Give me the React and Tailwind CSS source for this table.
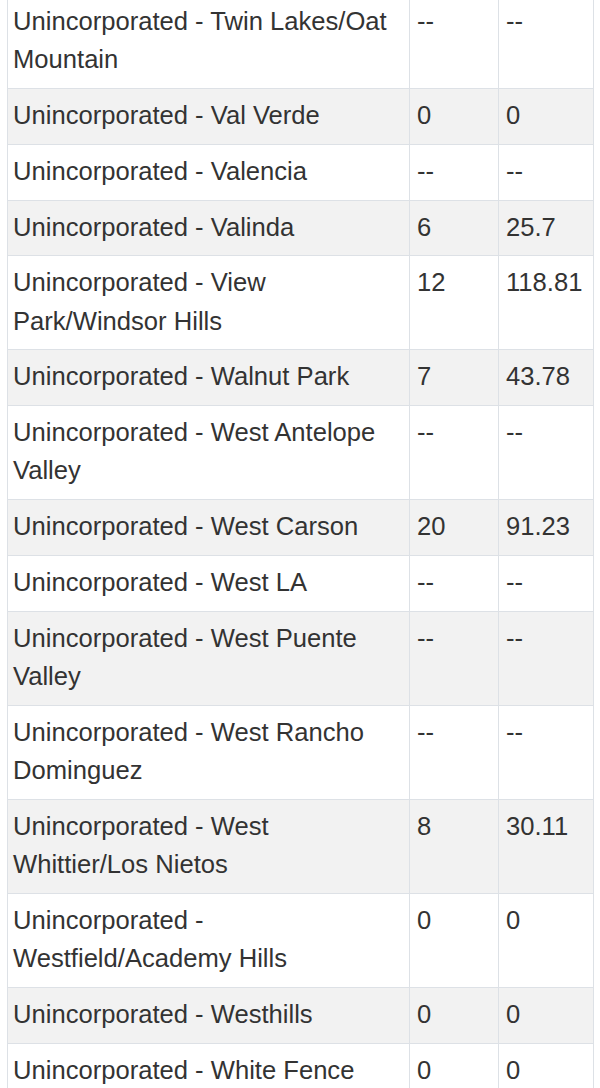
const rows = [
  ["Unincorporated - Twin Lakes/Oat Mountain", "--", "--"],
  ["Unincorporated - Val Verde", "0", "0"],
  ["Unincorporated - Valencia", "--", "--"],
  ["Unincorporated - Valinda", "6", "25.7"],
  ["Unincorporated - View Park/Windsor Hills", "12", "118.81"],
  ["Unincorporated - Walnut Park", "7", "43.78"],
  ["Unincorporated - West Antelope Valley", "--", "--"],
  ["Unincorporated - West Carson", "20", "91.23"],
  ["Unincorporated - West LA", "--", "--"],
  ["Unincorporated - West Puente Valley", "--", "--"],
  ["Unincorporated - West Rancho Dominguez", "--", "--"],
  ["Unincorporated - West Whittier/Los Nietos", "8", "30.11"],
  ["Unincorporated - Westfield/Academy Hills", "0", "0"],
  ["Unincorporated - Westhills", "0", "0"],
  ["Unincorporated - White Fence", "0", "0"],
];

export default function App() {
  const cell = "border border-[#dde1e6] align-top pl-[5px] pr-[5px] pt-[7px] pb-[9.3px]";

  return (
    <div className="bg-white min-h-screen overflow-hidden">
      <table
        className="ml-[7px] -mt-[6px] w-[586px] table-fixed border-collapse text-[25.6px] leading-[38.4px] text-[#333]"
        style={{ fontFamily: '"Liberation Sans", Arial, sans-serif' }}
      >
        <colgroup>
          <col className="w-[402px]" />
          <col className="w-[89px]" />
          <col className="w-[95px]" />
        </colgroup>
        <tbody>
          {rows.map((r, i) => (
            <tr key={r[0]} className={i % 2 === 1 ? "bg-[#f2f2f2]" : "bg-white"}>
              <td className={cell}>{r[0]}</td>
              <td className={cell + " pl-[7px]"}>{r[1]}</td>
              <td className={cell + " pl-[7px]"}>{r[2]}</td>
            </tr>
          ))}
        </tbody>
      </table>
    </div>
  );
}
